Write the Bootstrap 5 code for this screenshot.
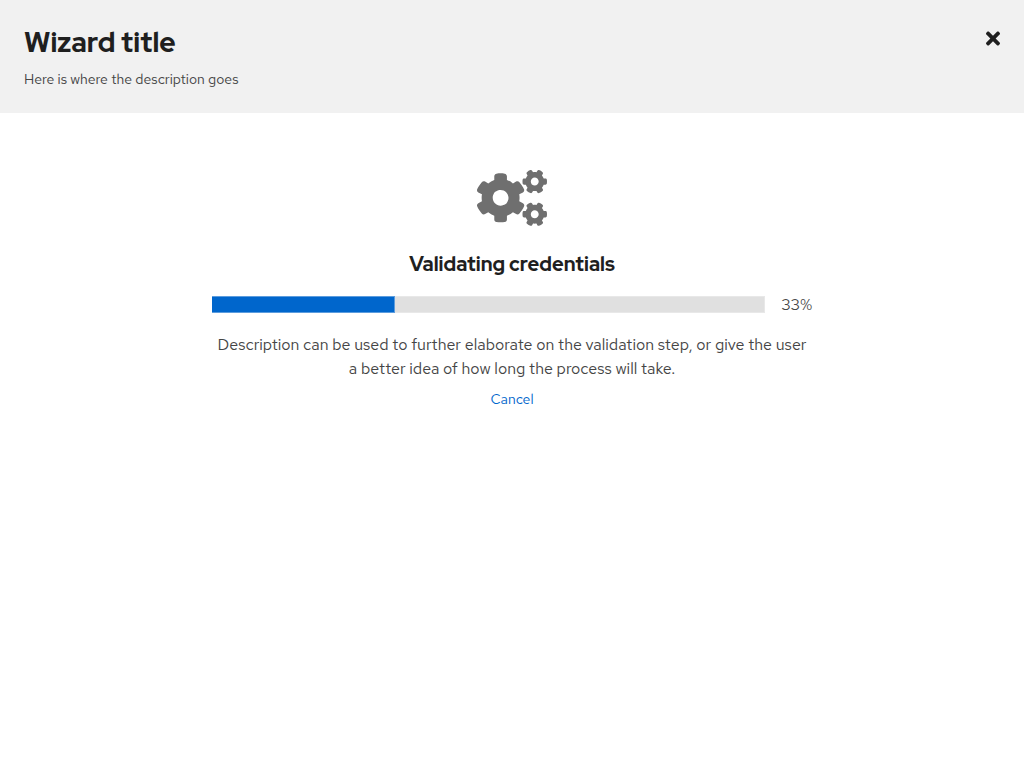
<!DOCTYPE html>
<html lang="en">
<head>
<meta charset="utf-8">
<meta name="viewport" content="width=device-width, initial-scale=1">
<title>Wizard title</title>
<link href="https://cdn.jsdelivr.net/npm/bootstrap@5.3.0/dist/css/bootstrap.min.css" rel="stylesheet">
<style>
  body { font-family: "Red Hat Text", Lato, sans-serif; font-size: 16px; line-height: 24px; color: #454545; background: #fff; }
  h1, h2 { font-family: "Red Hat Display", Lato, sans-serif; color: #1f1f1f; }
  .wizard-header { background: #f1f1f1; }
  .wizard-header h1 { font-size: 28px; line-height: 36px; font-weight: 800; margin-bottom: 9px; }
  .wizard-header p { font-size: 14px; line-height: 20px; }
  .wizard-close { color: #1f1f1f; line-height: 1; }
  .wizard-status { max-width: 600px; padding-top: 57px; }
  .wizard-status h2 { font-size: 20px; line-height: 28px; font-weight: 800; margin-bottom: 14px; }
  .cogs { color: #6f6f6f; }
  .progress { --bs-progress-height: 17px; --bs-progress-bg: #e0e0e0; --bs-progress-bar-bg: #0066cc; --bs-progress-border-radius: 0; box-shadow: inset 0 0 0 1px #e8e8e8; }
  .progress-bar { border: 1px solid #5c9cdd; border-left: 0; }
  .progress-measure { line-height: 25px; }
  .btn-cancel { --bs-btn-color: #0066cc; --bs-btn-font-size: 14px; --bs-btn-line-height: 21px; --bs-btn-padding-y: 7px; text-decoration: none; }
</style>
</head>
<body>
<header class="wizard-header d-flex justify-content-between align-items-start p-4">
  <div>
    <h1>Wizard title</h1>
    <p class="mb-0">Here is where the description goes</p>
  </div>
  <button type="button" class="wizard-close btn border-0 p-0 mt-1" aria-label="Close">
    <svg class="d-block" width="14" height="21" viewBox="0 0 352 512" fill="currentColor" aria-hidden="true"><path d="M242.72 256l100.07-100.07c12.28-12.28 12.28-32.19 0-44.48l-22.24-22.24c-12.28-12.28-32.19-12.28-44.48 0L176 189.28 75.93 89.21c-12.28-12.28-32.19-12.28-44.48 0L9.21 111.45c-12.28 12.28-12.28 32.19 0 44.48L109.28 256 9.21 356.07c-12.28 12.28-12.28 32.19 0 44.48l22.24 22.24c12.28 12.28 32.2 12.28 44.48 0L176 322.72l100.07 100.07c12.28 12.28 32.2 12.28 44.48 0l22.24-22.24c12.28-12.28 12.28-32.19 0-44.48L242.72 256z"/></svg>
  </button>
</header>
<main class="wizard-status container-fluid px-0 text-center">
  <svg class="cogs d-block mx-auto" width="70" height="56" viewBox="0 0 640 512" fill="currentColor" aria-hidden="true">
    <path id="small-cog" d="M512.1 191l-8.2 14.3c-3 5.3-9.4 7.5-15.1 5.4-11.8-4.4-22.6-10.7-32.1-18.6-4.6-3.8-5.8-10.5-2.8-15.7l8.2-14.3c-6.9-8-12.3-17.3-15.9-27.4h-16.5c-6 0-11.2-4.3-12.2-10.3-2-12-2.1-24.6 0-37.1 1-6 6.2-10.4 12.2-10.4h16.5c3.6-10.1 9-19.4 15.9-27.4l-8.2-14.3c-3-5.2-1.9-11.9 2.8-15.7 9.5-7.9 20.4-14.2 32.1-18.6 5.7-2.1 12.1.1 15.1 5.4l8.2 14.3c10.5-1.9 21.2-1.9 31.7 0L552 6.3c3-5.3 9.4-7.5 15.1-5.4 11.8 4.4 22.6 10.7 32.1 18.6 4.6 3.8 5.8 10.5 2.8 15.7l-8.2 14.3c6.9 8 12.3 17.3 15.9 27.4h16.5c6 0 11.2 4.3 12.2 10.3 2 12 2.1 24.6 0 37.1-1 6-6.2 10.4-12.2 10.4h-16.5c-3.6 10.1-9 19.4-15.9 27.4l8.2 14.3c3 5.2 1.9 11.9-2.8 15.7-9.5 7.9-20.4 14.2-32.1 18.6-5.7 2.1-12.1-.1-15.1-5.4l-8.2-14.3c-10.4 1.9-21.2 1.9-31.7 0zm-10.5-58.8c38.5 29.6 82.4-14.3 52.8-52.8-38.5-29.7-82.4 14.3-52.8 52.8z"/>
    <use href="#small-cog" y="299"/>
    <path d="M386.3 286.1l33.7 16.8c10.1 5.8 14.5 18.1 10.5 29.1-8.9 24.2-26.4 46.4-42.6 65.8-7.4 8.9-20.2 11.1-30.3 5.3l-29.1-16.8c-16 13.7-34.6 24.6-54.9 31.7v33.6c0 11.6-8.3 21.6-19.7 23.6-24.6 4.2-50.4 4.4-75.9 0-11.5-2-20-11.9-20-23.6V418c-20.3-7.2-38.9-18-54.9-31.7L74 403c-10 5.8-22.9 3.6-30.3-5.3-16.2-19.4-33.3-41.6-42.2-65.7-4-10.9.4-23.2 10.5-29.1l33.3-16.8c-3.9-20.9-3.9-42.4 0-63.4L12 205.8c-10.1-5.8-14.6-18.1-10.5-29 8.9-24.2 26-46.4 42.2-65.8 7.4-8.9 20.2-11.1 30.3-5.3l29.1 16.8c16-13.7 34.6-24.6 54.9-31.7V57.1c0-11.5 8.2-21.5 19.6-23.5 24.6-4.2 50.5-4.4 76-.1 11.5 2 20 11.9 20 23.6v33.6c20.3 7.2 38.9 18 54.9 31.7l29.1-16.8c10-5.8 22.9-3.6 30.3 5.3 16.2 19.4 33.2 41.6 42.1 65.8 4 10.9.1 23.2-10 29.1l-33.7 16.8c3.9 21 3.9 42.5 0 63.5zm-117.6 21.1c59.2-77-28.7-164.9-105.7-105.7-59.2 77 28.7 164.9 105.7 105.7z"/>
  </svg>
  <h2 class="mt-4">Validating credentials</h2>
  <div class="d-flex align-items-center gap-3">
    <div class="progress flex-grow-1" role="progressbar" aria-label="Validating credentials" aria-valuenow="33" aria-valuemin="0" aria-valuemax="100">
      <div class="progress-bar" style="width: 33%"></div>
    </div>
    <span class="progress-measure">33%</span>
  </div>
  <p class="mt-3 mb-0">Description can be used to further elaborate on the validation step, or give the user a better idea of how long the process will take.</p>
  <button type="button" class="btn btn-link btn-cancel">Cancel</button>
</main>
<script src="https://cdn.jsdelivr.net/npm/bootstrap@5.3.0/dist/js/bootstrap.bundle.min.js"></script>
</body>
</html>
